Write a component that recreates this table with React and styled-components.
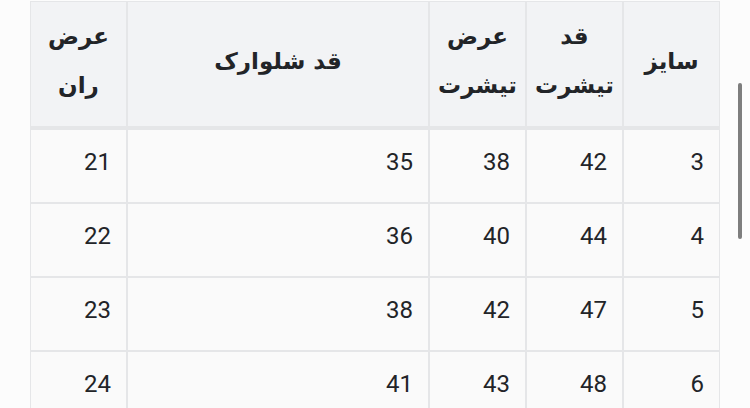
import React from "react";
import styled, { createGlobalStyle } from "styled-components";

const GlobalStyle = createGlobalStyle`
  html, body {
    margin: 0;
    padding: 0;
    background: #fcfcfc;
    overflow: hidden;
  }
  body {
    font-family: "DejaVu Sans", "Noto Sans", sans-serif;
  }
`;

const Page = styled.div`
  position: relative;
  height: 408px;
  padding: 1px 30px 0 30px;
  box-sizing: border-box;
  overflow: hidden;
`;

const Table = styled.table`
  direction: rtl;
  width: 690px;
  border-collapse: separate;
  border-spacing: 0;
  table-layout: fixed;
  color: #222428;
`;

const HeadCell = styled.th`
  box-sizing: border-box;
  width: ${(p) => p.$w}px;
  height: 128px;
  background: #f2f3f5;
  border: 1px solid #e5e6e8;
  border-bottom-width: 3px;
  font-family: "DejaVu Sans", sans-serif;
  font-weight: 700;
  font-size: 23px;
  line-height: 49px;
  text-align: center;
  vertical-align: middle;
  padding: 0 4px 6px;
`;

const Cell = styled.td`
  box-sizing: border-box;
  height: 74px;
  background: #fafafa;
  border: 1px solid #e5e6e8;
  font-family: "Roboto", "Liberation Sans", sans-serif;
  font-size: 24px;
  text-align: right;
  vertical-align: middle;
  padding: 0 15px 8px;
  direction: ltr;
`;

const Scroll = styled.div`
  position: absolute;
  left: 738px;
  top: 83px;
  width: 4px;
  height: 156px;
  border-radius: 2px;
  background: #7e7e7e;
`;

const columns = [
  { key: "size", title: ["سایز"], w: 97 },
  { key: "len", title: ["قد", "تیشرت"], w: 97 },
  { key: "wid", title: ["عرض", "تیشرت"], w: 97 },
  { key: "pants", title: ["قد شلوارک"], w: 302 },
  { key: "thigh", title: ["عرض", "ران"], w: 97 },
];

const rows = [
  [3, 42, 38, 35, 21],
  [4, 44, 40, 36, 22],
  [5, 47, 42, 38, 23],
  [6, 48, 43, 41, 24],
];

export default function App() {
  return (
    <>
      <GlobalStyle />
      <Page>
        <Table>
          <thead>
            <tr>
              {columns.map((c) => (
                <HeadCell key={c.key} $w={c.w}>
                  {c.title.map((t, i) => (
                    <div key={i}>{t}</div>
                  ))}
                </HeadCell>
              ))}
            </tr>
          </thead>
          <tbody>
            {rows.map((r) => (
              <tr key={r[0]}>
                {r.map((v, i) => (
                  <Cell key={i}>{v}</Cell>
                ))}
              </tr>
            ))}
          </tbody>
        </Table>
        <Scroll />
      </Page>
    </>
  );
}
